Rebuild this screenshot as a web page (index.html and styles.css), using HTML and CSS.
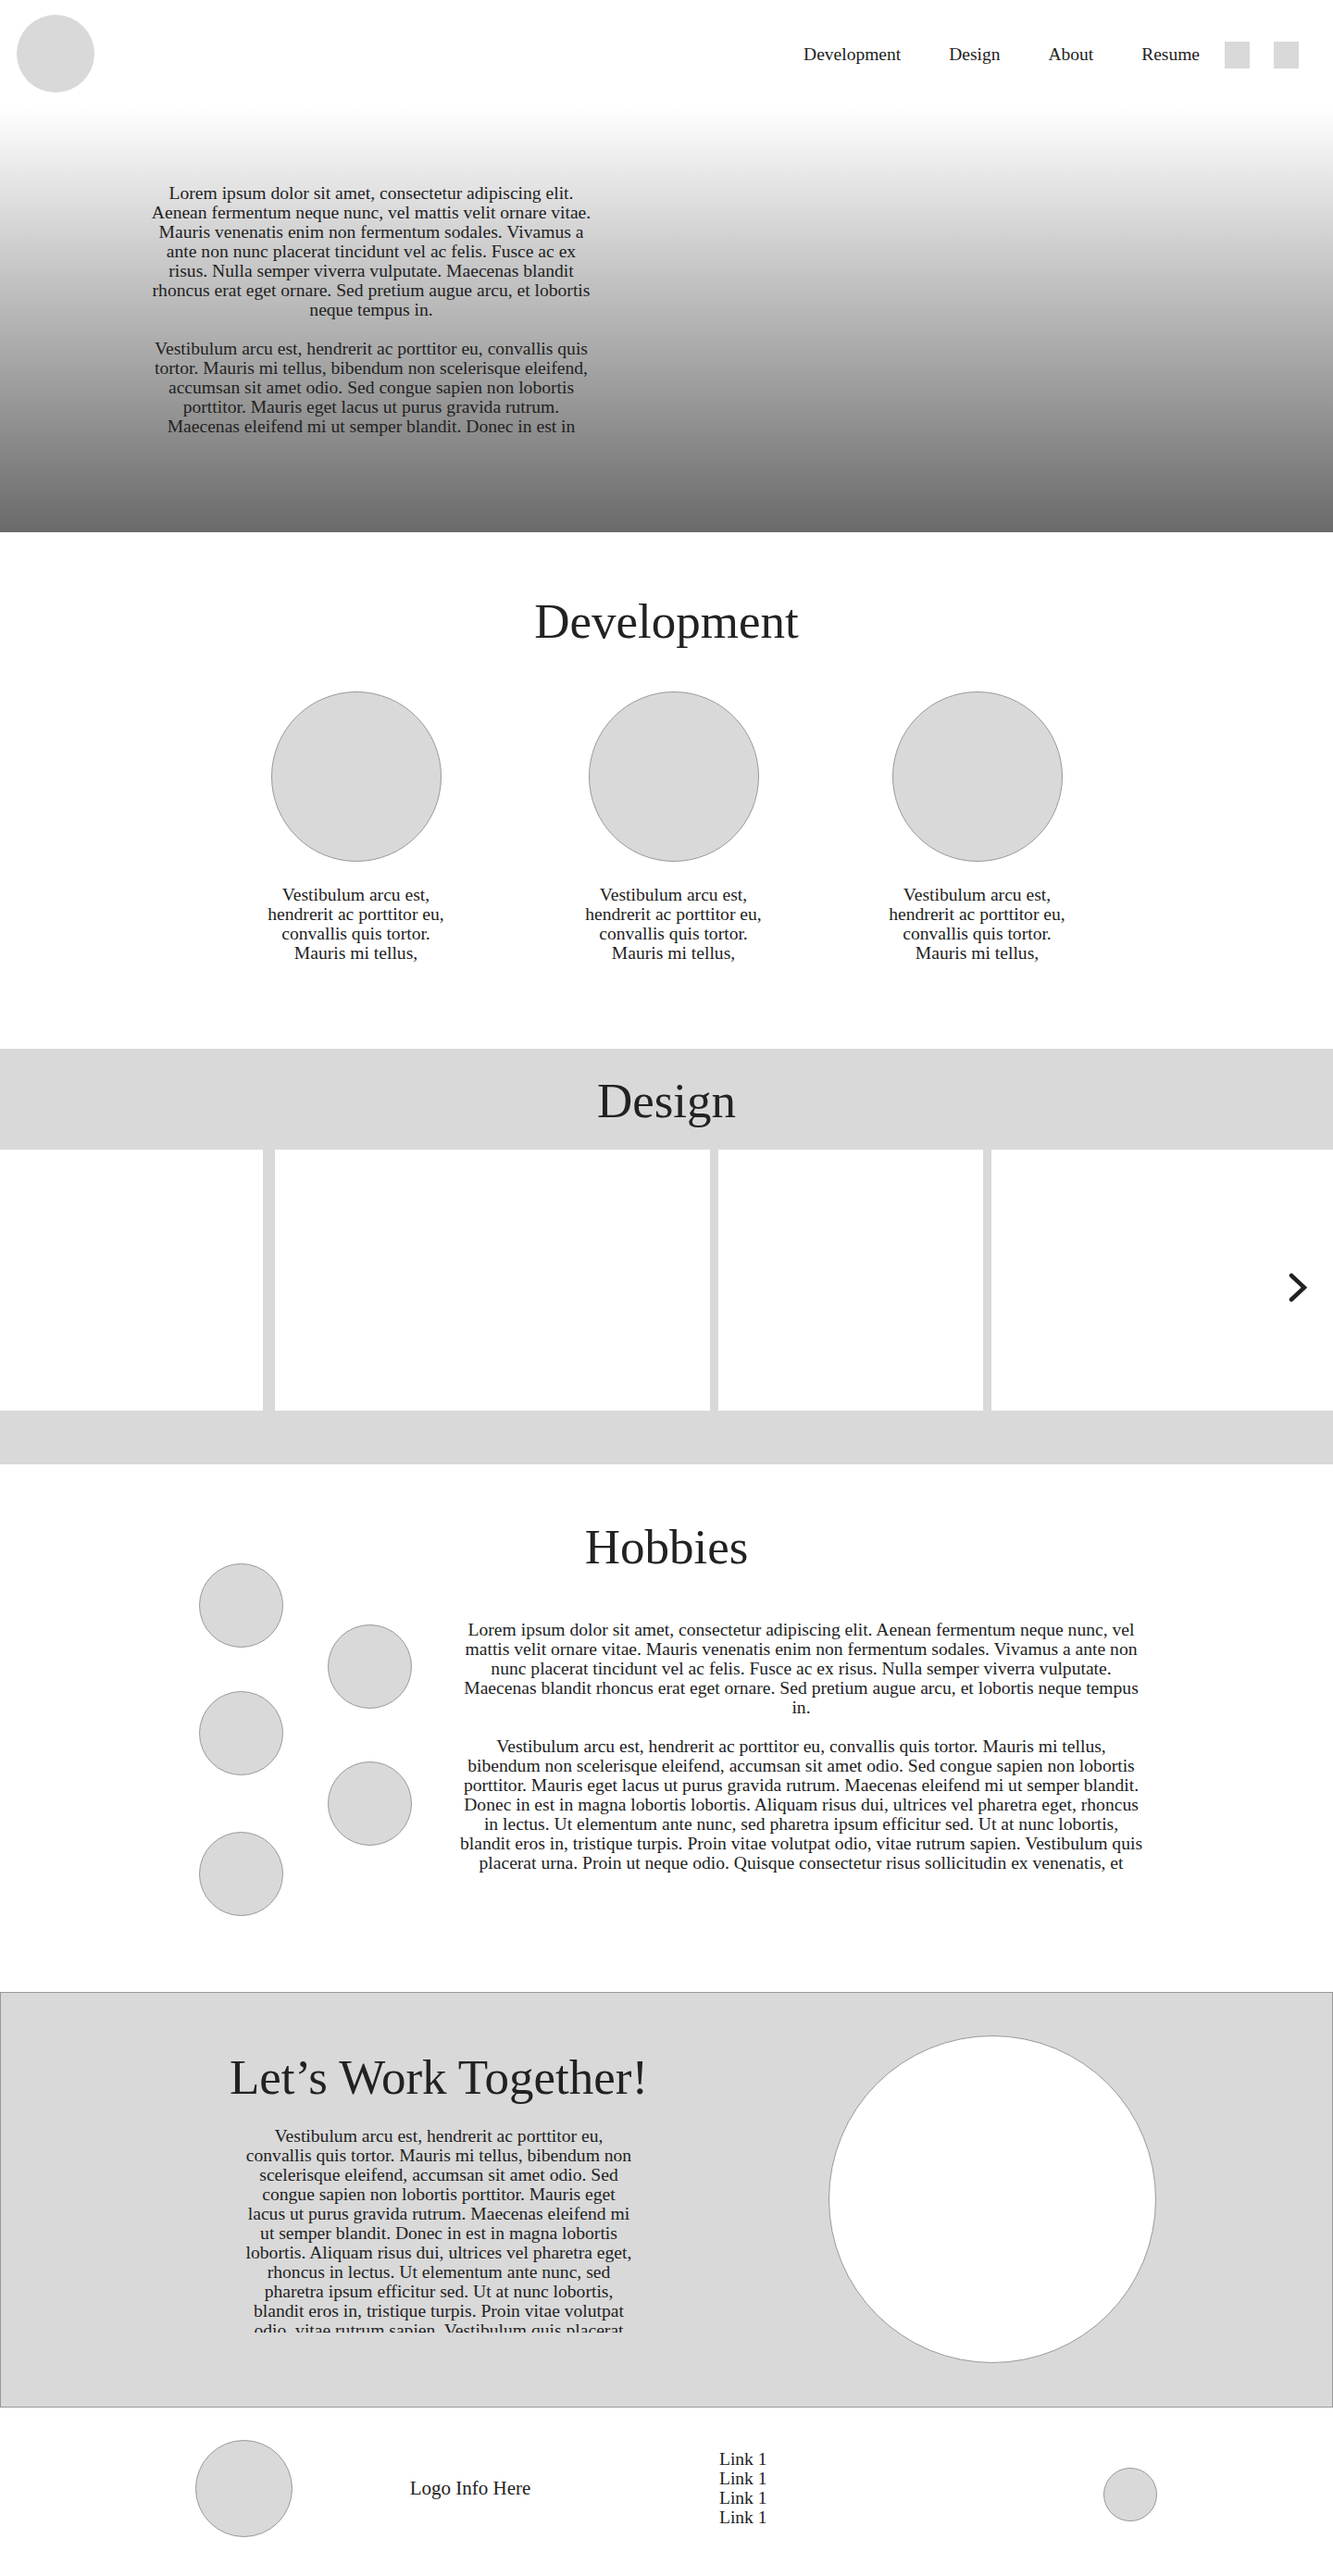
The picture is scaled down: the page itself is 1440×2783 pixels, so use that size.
FILE: index.html
```html
<!DOCTYPE html>
<html lang="en">
<head>
    <meta charset="UTF-8">
    <meta name="viewport" content="width=device-width, initial-scale=1.0">
    <title>Portfolio</title>
    <link rel="stylesheet" href="styles.css">
</head>
<body>
    <header class="site-header">
        <div class="logo"></div>
        <nav class="main-nav">
            <a href="#development">Development</a>
            <a href="#design">Design</a>
            <a href="#about">About</a>
            <a href="#resume">Resume</a>
            <span class="social-box"></span>
            <span class="social-box"></span>
        </nav>
    </header>

    <section class="hero">
        <div class="hero-text">
            <p>Lorem ipsum dolor sit amet, consectetur adipiscing elit. Aenean fermentum neque nunc, vel mattis velit ornare vitae. Mauris venenatis enim non fermentum sodales. Vivamus a ante non nunc placerat tincidunt vel ac felis. Fusce ac ex risus. Nulla semper viverra vulputate. Maecenas blandit rhoncus erat eget ornare. Sed pretium augue arcu, et lobortis neque tempus in.</p>
            <p>Vestibulum arcu est, hendrerit ac porttitor eu, convallis quis tortor. Mauris mi tellus, bibendum non scelerisque eleifend, accumsan sit amet odio. Sed congue sapien non lobortis porttitor. Mauris eget lacus ut purus gravida rutrum. Maecenas eleifend mi ut semper blandit. Donec in est in magna lobortis lobortis. Aliquam risus dui, ultrices vel pharetra eget, rhoncus in lectus.</p>
        </div>
    </section>

    <section class="development" id="development">
        <h2>Development</h2>
        <div class="dev-row">
            <div class="dev-item">
                <div class="dev-circle"></div>
                <p>Vestibulum arcu est, hendrerit ac porttitor eu, convallis quis tortor. Mauris mi tellus,</p>
            </div>
            <div class="dev-item">
                <div class="dev-circle"></div>
                <p>Vestibulum arcu est, hendrerit ac porttitor eu, convallis quis tortor. Mauris mi tellus,</p>
            </div>
            <div class="dev-item">
                <div class="dev-circle"></div>
                <p>Vestibulum arcu est, hendrerit ac porttitor eu, convallis quis tortor. Mauris mi tellus,</p>
            </div>
        </div>
    </section>

    <section class="design" id="design">
        <h2>Design</h2>
        <div class="gallery">
            <div class="slide slide-1"></div>
            <div class="slide slide-2"></div>
            <div class="slide slide-3"></div>
            <div class="slide slide-4"></div>
            <button class="gallery-next" type="button" aria-label="Next">
                <svg width="20" height="32" viewBox="0 0 20 32">
                    <polyline points="3,3 17,16 3,29" fill="none" stroke="#222" stroke-width="4.5" stroke-linecap="round" stroke-linejoin="miter"/>
                </svg>
            </button>
        </div>
    </section>

    <section class="hobbies" id="about">
        <h2>Hobbies</h2>
        <div class="hobby-row">
            <div class="bubbles">
                <div class="bubble-col bubble-col-left">
                    <div class="bubble"></div>
                    <div class="bubble"></div>
                    <div class="bubble"></div>
                </div>
                <div class="bubble-col bubble-col-right">
                    <div class="bubble"></div>
                    <div class="bubble"></div>
                </div>
            </div>
            <div class="hobby-text">
                <p>Lorem ipsum dolor sit amet, consectetur adipiscing elit. Aenean fermentum neque nunc, vel mattis velit ornare vitae. Mauris venenatis enim non fermentum sodales. Vivamus a ante non nunc placerat tincidunt vel ac felis. Fusce ac ex risus. Nulla semper viverra vulputate. Maecenas blandit rhoncus erat eget ornare. Sed pretium augue arcu, et lobortis neque tempus in.</p>
                <p>Vestibulum arcu est, hendrerit ac porttitor eu, convallis quis tortor. Mauris mi tellus, bibendum non scelerisque eleifend, accumsan sit amet odio. Sed congue sapien non lobortis porttitor. Mauris eget lacus ut purus gravida rutrum. Maecenas eleifend mi ut semper blandit. Donec in est in magna lobortis lobortis. Aliquam risus dui, ultrices vel pharetra eget, rhoncus in lectus. Ut elementum ante nunc, sed pharetra ipsum efficitur sed. Ut at nunc lobortis, blandit eros in, tristique turpis. Proin vitae volutpat odio, vitae rutrum sapien. Vestibulum quis placerat urna. Proin ut neque odio. Quisque consectetur risus sollicitudin ex venenatis, et ultricies nisi dapibus.</p>
            </div>
        </div>
    </section>

    <section class="contact" id="resume">
        <div class="contact-text">
            <h2>Let&rsquo;s Work Together!</h2>
            <p>Vestibulum arcu est, hendrerit ac porttitor eu, convallis quis tortor. Mauris mi tellus, bibendum non scelerisque eleifend, accumsan sit amet odio. Sed congue sapien non lobortis porttitor. Mauris eget lacus ut purus gravida rutrum. Maecenas eleifend mi ut semper blandit. Donec in est in magna lobortis lobortis. Aliquam risus dui, ultrices vel pharetra eget, rhoncus in lectus. Ut elementum ante nunc, sed pharetra ipsum efficitur sed. Ut at nunc lobortis, blandit eros in, tristique turpis. Proin vitae volutpat odio, vitae rutrum sapien. Vestibulum quis placerat urna. Proin ut neque odio.</p>
        </div>
        <div class="contact-circle"></div>
    </section>

    <footer class="site-footer">
        <div class="footer-logo"></div>
        <div class="footer-info">Logo Info Here</div>
        <ul class="footer-links">
            <li><a href="#">Link 1</a></li>
            <li><a href="#">Link 1</a></li>
            <li><a href="#">Link 1</a></li>
            <li><a href="#">Link 1</a></li>
        </ul>
        <div class="footer-badge"></div>
    </footer>
</body>
</html>
```

FILE: styles.css
```css
body {
    font-family: 'Liberation Serif', 'Times New Roman', serif;
    color: #222;
    margin: 0;
    padding: 0;
    background-color: #fff;
}
h2 {
    font-weight: normal;
    font-size: 53px;
    line-height: 60px;
    margin: 0;
    text-align: center;
}
p {
    margin: 0;
}
a {
    color: inherit;
    text-decoration: none;
}

/* header */
.site-header {
    height: 116px;
    display: flex;
    justify-content: space-between;
    align-items: center;
    padding: 0 37px 0 18px;
}
.logo {
    width: 84px;
    height: 84px;
    border-radius: 50%;
    background-color: #d9d9d9;
}
.main-nav {
    display: flex;
    align-items: center;
    font-size: 19.5px;
    margin-top: 2px;
}
.main-nav a {
    margin-right: 52px;
}
.main-nav a:last-of-type {
    margin-right: 27px;
}
.social-box {
    width: 27px;
    height: 29px;
    background-color: #d9d9d9;
}
.social-box + .social-box {
    margin-left: 26px;
}

/* hero */
.hero {
    height: 459px;
    background: linear-gradient(to bottom, #ffffff 0%, #6a6a6a 100%);
    padding: 82px 0 0 160px;
    box-sizing: border-box;
}
.hero-text {
    width: 482px;
    height: 273px;
    overflow: hidden;
    text-align: center;
    font-size: 19.6px;
    line-height: 21px;
}
.hero-text p + p,
.hobby-text p + p {
    margin-top: 21px;
}

/* development */
.development {
    height: 558px;
    padding-top: 66px;
    box-sizing: border-box;
}
.dev-row {
    display: flex;
    justify-content: center;
    margin-top: 46px;
}
.dev-item {
    width: 200px;
    text-align: center;
    font-size: 19.6px;
    line-height: 21px;
}
.dev-item:nth-child(2) {
    margin-left: 143px;
}
.dev-item:nth-child(3) {
    margin-left: 128px;
}
.dev-circle {
    width: 184px;
    height: 184px;
    margin: 0 auto 25px;
    border-radius: 50%;
    border: 1px solid #999;
    background-color: #d9d9d9;
    box-sizing: border-box;
}

/* design */
.design {
    background-color: #d9d9d9;
    padding-bottom: 58px;
}
.design h2 {
    height: 109px;
    line-height: 113px;
}
.gallery {
    position: relative;
    display: flex;
    height: 282px;
    overflow: hidden;
}
.slide {
    flex-shrink: 0;
    background-color: #fff;
    height: 100%;
}
.slide-1 { width: 284px; margin-right: 13px; }
.slide-2 { width: 470px; margin-right: 9px; }
.slide-3 { width: 286px; margin-right: 9px; }
.slide-4 { width: 400px; }
.gallery-next {
    position: absolute;
    top: 133px;
    left: 1392px;
    padding: 0;
    border: none;
    background: none;
    cursor: pointer;
}
.gallery-next svg {
    display: block;
}

/* hobbies */
.hobbies {
    height: 570px;
    padding-top: 59px;
    box-sizing: border-box;
}
.hobbies h2 {
    margin-bottom: -12px;
}
.hobby-row {
    display: flex;
    padding-left: 215px;
}
.bubbles {
    display: flex;
}
.bubble-col {
    display: flex;
    flex-direction: column;
}
.bubble {
    width: 91px;
    height: 91px;
    border-radius: 50%;
    border: 1px solid #999;
    background-color: #d9d9d9;
    box-sizing: border-box;
}
.bubble-col-left .bubble:nth-child(2) { margin-top: 47px; }
.bubble-col-left .bubble:nth-child(3) { margin-top: 61px; }
.bubble-col-right {
    margin-left: 48px;
    padding-top: 66px;
}
.bubble-col-right .bubble + .bubble { margin-top: 57px; }
.hobby-text {
    width: 741px;
    height: 273px;
    margin: 61px 0 0 50px;
    overflow: hidden;
    text-align: center;
    font-size: 19.6px;
    line-height: 21px;
}

/* contact */
.contact {
    display: flex;
    align-items: flex-start;
    height: 449px;
    box-sizing: border-box;
    border: 1px solid #999;
    background-color: #d9d9d9;
    padding-left: 243px;
}
.contact-text {
    width: 460px;
    margin-top: 61px;
}
.contact-text p {
    width: 426px;
    height: 223px;
    margin: 23px auto 0;
    overflow: hidden;
    text-align: center;
    font-size: 19.6px;
    line-height: 21px;
}
.contact-circle {
    width: 354px;
    height: 354px;
    margin: 46px 0 0 191px;
    border-radius: 50%;
    border: 1px solid #999;
    background-color: #fff;
    box-sizing: border-box;
}

/* footer */
.site-footer {
    display: flex;
    align-items: center;
    height: 182px;
    padding-left: 211px;
}
.footer-logo {
    width: 105px;
    height: 105px;
    border-radius: 50%;
    border: 1px solid #999;
    background-color: #d9d9d9;
    box-sizing: border-box;
    margin-top: -8px;
}
.footer-info {
    width: 170px;
    margin: -8px 0 0 107px;
    text-align: center;
    font-size: 21px;
    white-space: nowrap;
}
.footer-links {
    width: 56px;
    list-style: none;
    margin: -8px 0 0 184px;
    padding: 0;
    font-size: 19.5px;
    line-height: 21px;
    white-space: nowrap;
}
.footer-badge {
    width: 58px;
    height: 58px;
    border-radius: 50%;
    border: 1px solid #999;
    background-color: #d9d9d9;
    box-sizing: border-box;
    margin: 6px 0 0 359px;
}
```
